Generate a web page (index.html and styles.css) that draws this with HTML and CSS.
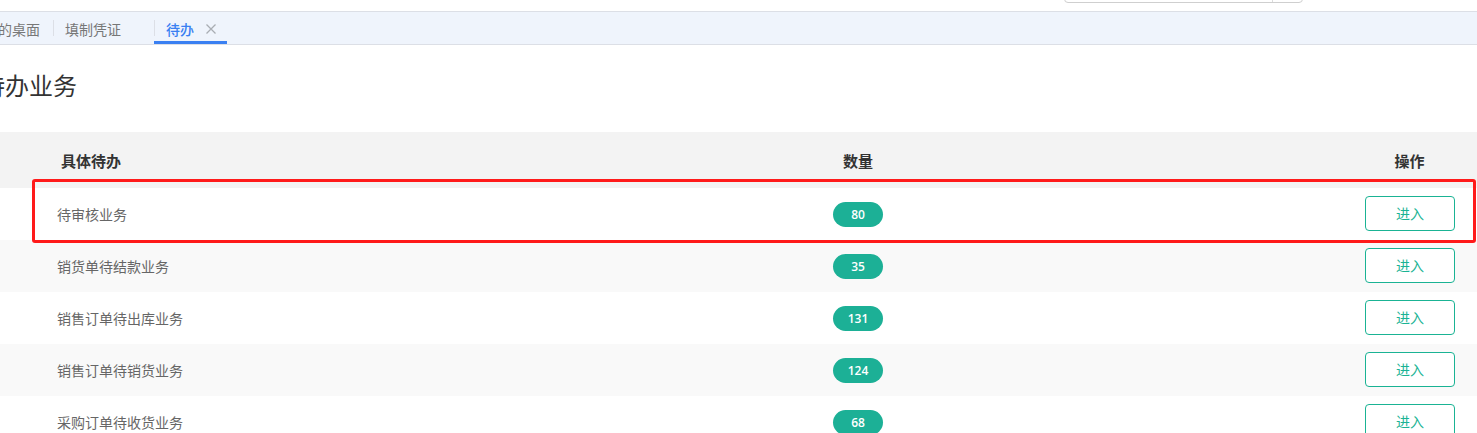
FILE: index.html
```html
<!DOCTYPE html>
<html lang="zh-CN">
<head>
    <meta charset="UTF-8">
    <meta name="viewport" content="width=device-width, initial-scale=1.0">
    <title>待办业务</title>
    <link rel="stylesheet" href="styles.css">
</head>
<body>
    <div class="topbar">
        <div class="search">
            <span class="search-input"></span>
            <span class="search-btn"></span>
        </div>
    </div>

    <div class="tabs">
        <div class="tab tab-home">我的桌面</div>
        <div class="tab">填制凭证<span class="tab-close hidden"></span></div>
        <div class="tab active">待办
            <span class="tab-close">
                <svg width="10" height="10" viewBox="0 0 10 10"><path d="M0.5 0.5L9.5 9.5M9.5 0.5L0.5 9.5" stroke="#a9adb3" stroke-width="1.3" fill="none"/></svg>
            </span>
        </div>
    </div>

    <h1 class="title">待办业务</h1>

    <div class="todo-table">
        <div class="row head">
            <div class="cell name">具体待办</div>
            <div class="cell count">数量</div>
            <div class="cell action">操作</div>
        </div>
        <div class="row">
            <div class="cell name">待审核业务</div>
            <div class="cell count"><span class="badge">80</span></div>
            <div class="cell action"><button class="enter">进入</button></div>
        </div>
        <div class="row">
            <div class="cell name">销货单待结款业务</div>
            <div class="cell count"><span class="badge">35</span></div>
            <div class="cell action"><button class="enter">进入</button></div>
        </div>
        <div class="row">
            <div class="cell name">销售订单待出库业务</div>
            <div class="cell count"><span class="badge">131</span></div>
            <div class="cell action"><button class="enter">进入</button></div>
        </div>
        <div class="row">
            <div class="cell name">销售订单待销货业务</div>
            <div class="cell count"><span class="badge">124</span></div>
            <div class="cell action"><button class="enter">进入</button></div>
        </div>
        <div class="row">
            <div class="cell name">采购订单待收货业务</div>
            <div class="cell count"><span class="badge">68</span></div>
            <div class="cell action"><button class="enter">进入</button></div>
        </div>

        <div class="highlight"></div>
    </div>
</body>
</html>
```

FILE: styles.css
```css
body {
    margin: 0;
    font-family: "Noto Sans CJK SC", "Liberation Sans", sans-serif;
    background: #fff;
    overflow: hidden;
    height: 433px;
}
.topbar {
    height: 11px;
    overflow: hidden;
    display: flex;
    justify-content: flex-end;
    align-items: flex-end;
}
.search {
    width: 237px;
    height: 30px;
    border: 1px solid #cfcfcf;
    border-radius: 4px;
    margin: 0 174px 8px 0;
    display: flex;
    flex-shrink: 0;
}
.search-input {
    flex: 1;
}
.search-btn {
    width: 29px;
    border-left: 1px solid #dcdcdc;
}
.tabs {
    height: 32px;
    border-top: 1px solid #dcdfe6;
    border-bottom: 1px solid #dcdfe6;
    background: #eff4fc;
    display: flex;
    margin-left: -27px;
}
.tab {
    display: flex;
    align-items: center;
    padding: 2px 11px 0 0;
    font-size: 14px;
    line-height: 16px;
    color: #777;
}
.tab + .tab::before {
    content: "";
    width: 1px;
    height: 16px;
    background: #dcdfe6;
    margin: -2px 11px 0 0;
}
.tab-home {
    padding-left: 11px;
    padding-right: 13px;
}
.tab-close {
    display: inline-flex;
    width: 10px;
    height: 10px;
    margin-left: 12px;
}
.tab-close.hidden {
    visibility: hidden;
}
.tab.active {
    color: #3a80f2;
    font-weight: 500;
    box-shadow: inset 0 -3px 0 #3a80f2;
}
.title {
    margin: 24px 0 31px -19px;
    font-size: 24px;
    line-height: 32px;
    font-weight: normal;
    color: #333;
}
.todo-table {
    position: relative;
}
.row {
    display: grid;
    grid-template-columns: 373px 1fr 134px;
    height: 52px;
    align-items: center;
    font-size: 14px;
    color: #666;
}
.row:nth-child(odd) {
    background: #f9f9f9;
}
.row.head {
    height: 56px;
    background: #f3f3f3;
    font-size: 15px;
    font-weight: bold;
    color: #333;
}
.cell.name {
    padding-left: 57px;
}
.head .cell.name {
    padding-left: 61px;
}
.cell.count, .cell.action {
    text-align: center;
}
.head .cell.action {
    padding-right: 1px;
}
.badge {
    display: inline-block;
    width: 50px;
    height: 25px;
    line-height: 25px;
    border-radius: 13px;
    background: #1cb096;
    color: #fff;
    font-family: "Open Sans", "Liberation Sans", sans-serif;
    font-size: 12px;
    font-weight: 600;
}
.enter {
    width: 90px;
    height: 35px;
    border: 1px solid #1ab394;
    border-radius: 4px;
    background: #fff;
    color: #1ab394;
    font-family: "Noto Sans CJK SC", sans-serif;
    font-size: 14px;
    cursor: pointer;
    display: block;
    margin: 0 auto;
    position: relative;
    top: -1px;
}
.highlight {
    position: absolute;
    left: 32px;
    top: 47px;
    width: 1438px;
    height: 58px;
    border: 3px solid #ff1a1a;
    border-radius: 3px;
}
```
